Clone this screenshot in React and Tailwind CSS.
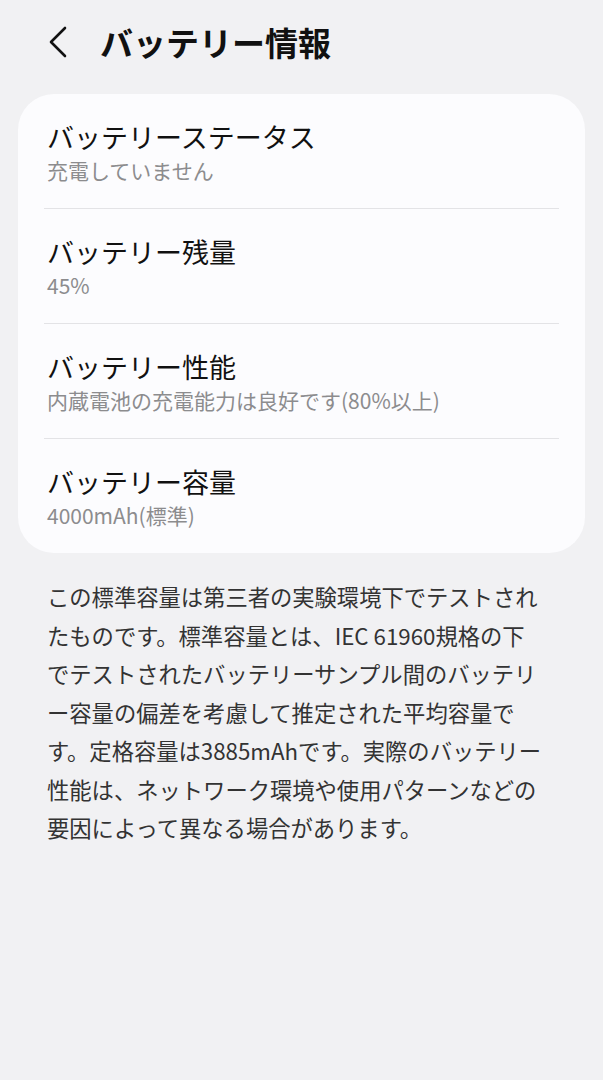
import React from 'react';

const rows = [
  { title: 'バッテリーステータス', value: '充電していません' },
  { title: 'バッテリー残量', value: '45%' },
  { title: 'バッテリー性能', value: '内蔵電池の充電能力は良好です(80%以上)' },
  { title: 'バッテリー容量', value: '4000mAh(標準)' },
];

const noteLines = [
  'この標準容量は第三者の実験環境下でテストされ',
  'たものです。標準容量とは、IEC 61960規格の下',
  'でテストされたバッテリーサンプル間のバッテリ',
  'ー容量の偏差を考慮して推定された平均容量で',
  'す。定格容量は3885mAhです。実際のバッテリー',
  '性能は、ネットワーク環境や使用パターンなどの',
  '要因によって異なる場合があります。',
];

function BackIcon() {
  return (
    <svg width="24" height="32" viewBox="0 0 24 32" fill="none">
      <path d="M19 2 L5 16 L19 30" stroke="#111" strokeWidth="2.6" strokeLinecap="round" strokeLinejoin="round" />
    </svg>
  );
}

export default function App() {
  return (
    <div
      className="min-h-screen w-full bg-[#f1f1f3] pb-10"
      style={{ fontFamily: '"Noto Sans CJK JP", "Noto Sans", sans-serif' }}
    >
      <header className="flex h-[84px] items-center pl-[46px]">
        <BackIcon />
        <h1 className="ml-[30px] text-[33px] font-bold leading-[44px] text-[#111]">バッテリー情報</h1>
      </header>

      <div className="mx-[18px] mt-[10px] rounded-[36px] bg-[#fcfcfe] px-[26px]">
        {rows.map((row, i) => (
          <div
            key={row.title}
            className={
              'pl-[3px] pt-[26px] pb-[24px] ' +
              (i < rows.length - 1 ? 'border-b border-[#e3e3e6]' : '')
            }
          >
            <div className="text-[27px] leading-[34px] text-[#111]">{row.title}</div>
            <div className="mt-[2px] text-[21px] leading-[28px] text-[#8c8c8e]">{row.value}</div>
          </div>
        ))}
      </div>

      <p className="mt-[24px] px-[47px] text-[22.3px] leading-[38.5px] text-[#333]">
        {noteLines.map((line, i) => (
          <span key={i} className="block whitespace-nowrap">
            {line}
          </span>
        ))}
      </p>
    </div>
  );
}
